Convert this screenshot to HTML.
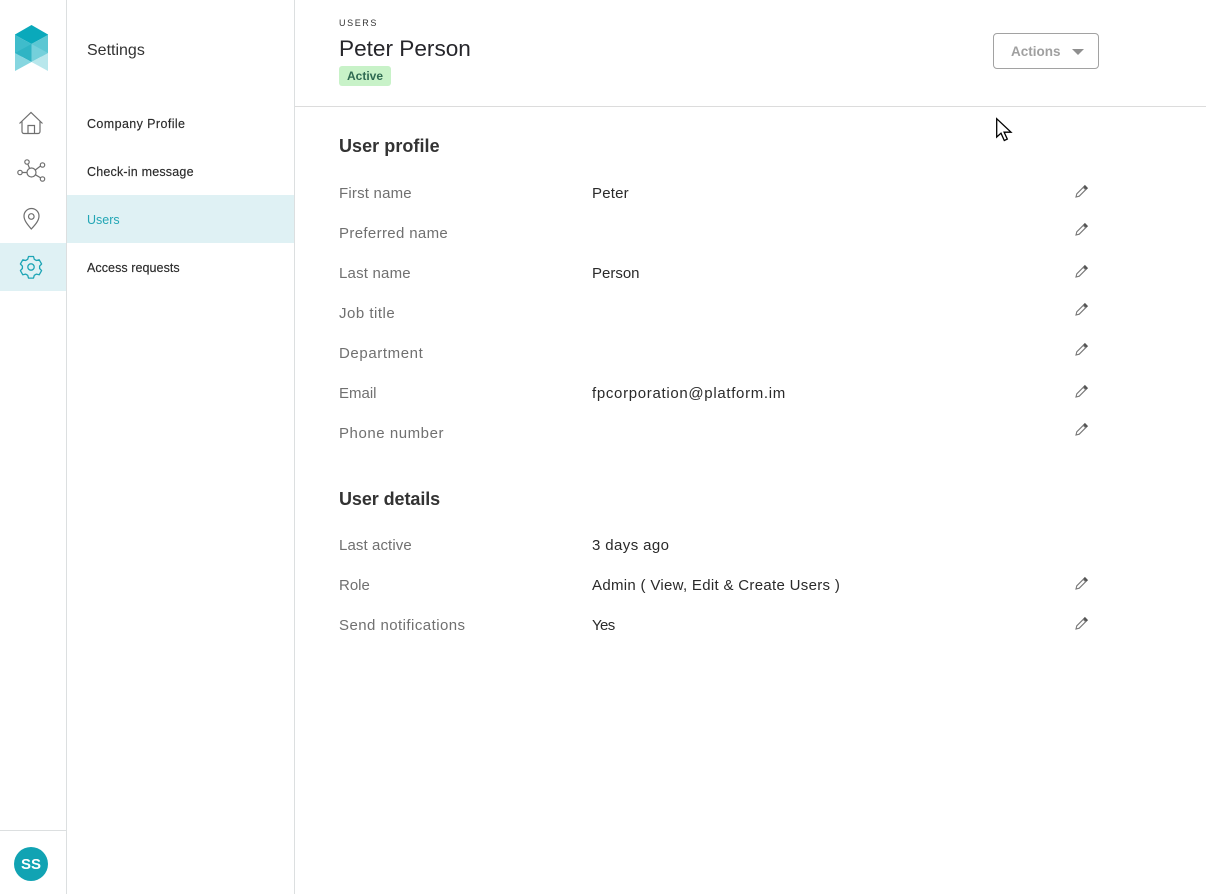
<!DOCTYPE html>
<html>
<head>
<meta charset="utf-8">
<style>
html,body{margin:0;padding:0;background:#fff}
body{position:relative;width:1206px;height:894px;overflow:hidden;font-family:"Liberation Sans",sans-serif;color:#222}
.a{position:absolute;white-space:nowrap}
.nav{left:87px;font-size:12.5px;line-height:16px;color:#2b2b2b;-webkit-text-stroke:.15px #2b2b2b}
.l{left:339px;font-size:15px;line-height:20px;color:#707070}
.v{left:592px;font-size:15px;line-height:20px;color:#2a2a2a}
.h{left:339px;font-size:18px;line-height:24px;font-weight:bold;color:#333}
svg{position:absolute;overflow:visible}
</style>
</head>
<body>
<div class="a" style="left:66px;top:0;width:1px;height:894px;background:#dcdfe0"></div>
<div class="a" style="left:294px;top:0;width:1px;height:894px;background:#dcdfe0"></div>
<div class="a" style="left:295px;top:106px;width:911px;height:1px;background:#dcdcdc"></div>
<div class="a" style="left:0;top:830px;width:66px;height:1px;background:#dcdfe0"></div>
<div class="a" style="left:0;top:243px;width:66px;height:48px;background:#dff1f4"></div>
<div class="a" style="left:67px;top:195px;width:227px;height:48px;background:#dff1f4"></div>

<svg style="left:0;top:0" width="66" height="90" viewBox="0 0 66 90">
<polygon points="31.5,25 48,34.500 48,35 31.500,44 15,35 15,34.500" fill="#0aa9bb"/>
<polygon points="15,35 31.500,44 31.500,52 15,60" fill="#3fbccb"/>
<polygon points="48,35 31.500,44 31.500,52 48,60" fill="#5cc7d3"/>
<polygon points="31.500,44 15,53 31.500,62" fill="#2fb4c4"/>
<polygon points="31.500,44 48,53 31.500,62" fill="#74d0db"/>
<polygon points="15,53 31.500,62 15,71" fill="#86d6e0"/>
<polygon points="48,53 31.500,62 48,71" fill="#b8e7ec"/>
</svg>

<svg style="left:0;top:100px" width="66" height="190" viewBox="0 0 66 190" fill="none" stroke="#6e6e6e" stroke-width="1.200">
<path d="M19.500 23.500 31 12.500 42.500 23.500M22 21v10.500a2 2 0 0 0 2 2h14a2 2 0 0 0 2-2V21M28 33.500V25.500h6.500v8"/>
<circle cx="31.500" cy="72.500" r="4.500"/>
<circle cx="20" cy="72.500" r="2.200"/><circle cx="27" cy="62" r="2.200"/><circle cx="42.500" cy="65" r="2.200"/><circle cx="42.500" cy="79" r="2.200"/>
<path d="M22.200 72.500H27M27.800 64.100l1.800 4.300M40.500 66 35.300 70M40.700 77.900 35.500 74.800"/>
<path d="M31.300 129C27.500 124.500 24 120.500 24 116a7.500 7.500 0 0 1 15 0c0 4.500-3.500 8.500-7.700 13z"/>
<circle cx="31.300" cy="116.500" r="2.800"/>
<g stroke="#1da5b5" stroke-width="1.300">
<circle cx="31" cy="167" r="3.200"/>
<path d="M28.500 156.500h5l.8 2.800 2.100 1.200 2.800-.7 2.400 4.200-2 2.100v2.400l2 2.100-2.400 4.200-2.800-.7-2.100 1.200-.8 2.800h-5l-.8-2.800-2.100-1.200-2.800.7-2.400-4.200 2-2.100v-2.400l-2-2.100 2.400-4.200 2.800.7 2.100-1.200z" stroke-linejoin="round"/>
</g>
</svg>

<div class="a" style="left:14px;top:847px;width:34px;height:34px;border-radius:50%;background:#11a3b3;color:#fff;font-size:15px;font-weight:bold;line-height:35px;text-align:center">SS</div>

<div class="a" style="left:87px;top:41px;font-size:16px;line-height:20px;color:#333">Settings</div>
<div class="a nav" style="top:116px;letter-spacing:.4px">Company Profile</div>
<div class="a nav" style="top:164px;letter-spacing:.2px">Check-in message</div>
<div class="a nav" style="top:212px;color:#22a6b5;-webkit-text-stroke:0">Users</div>
<div class="a nav" style="top:260px;letter-spacing:.07px">Access requests</div>

<div class="a" style="left:339px;top:18px;font-size:9px;line-height:11px;letter-spacing:1.6px;color:#333">USERS</div>
<div class="a" style="left:339px;top:34px;font-size:22.600px;line-height:30px;color:#26262b">Peter Person</div>
<div class="a" style="left:339px;top:66px;width:52px;height:20px;border-radius:3px;background:#c8f2c8;color:#2f6a52;font-size:12px;font-weight:bold;line-height:21px;text-align:center">Active</div>

<div class="a" style="left:993px;top:33px;width:104px;height:34px;border:1px solid #a2a2a2;border-radius:4px"></div>
<div class="a" style="left:1011px;top:43px;font-size:13.500px;font-weight:bold;line-height:18px;color:#a0a0a0">Actions</div>
<svg style="left:1072px;top:48.500px" width="12" height="7"><polygon points="0,0 12,0 6,6" fill="#8f8f8f"/></svg>

<svg style="left:996px;top:118px" width="16" height="25" viewBox="0 0 16 25"><path d="M.7.700V19l4.300-3.800 3.300 7.300 3-1.400-3.200-6.900H15z" fill="#fff" stroke="#000" stroke-width="1.300"/></svg>

<div class="a h" style="left:339px;top:134px;letter-spacing:.05px">User profile</div>
<div class="a l" style="top:184px;letter-spacing:.2px">First name</div><div class="a v" style="top:184px;letter-spacing:.2px">Peter</div>
<div class="a l" style="top:224px;letter-spacing:.35px">Preferred name</div>
<div class="a l" style="top:264px;letter-spacing:.2px">Last name</div><div class="a v" style="top:264px">Person</div>
<div class="a l" style="top:304px;letter-spacing:.5px">Job title</div>
<div class="a l" style="top:344px;letter-spacing:.6px">Department</div>
<div class="a l" style="top:384px">Email</div><div class="a v" style="top:384px;letter-spacing:.68px">fpcorporation@platform.im</div>
<div class="a l" style="top:424px;letter-spacing:.55px">Phone number</div>

<div class="a h" style="left:339px;top:487px;letter-spacing:-.08px">User details</div>
<div class="a l" style="top:536px;letter-spacing:.1px">Last active</div><div class="a v" style="top:536px;letter-spacing:.4px">3 days ago</div>
<div class="a l" style="top:576px">Role</div><div class="a v" style="top:576px;letter-spacing:.31px">Admin ( View, Edit &amp; Create Users )</div>
<div class="a l" style="top:616px;letter-spacing:.45px">Send notifications</div><div class="a v" style="top:616px;letter-spacing:-.6px">Yes</div>

<svg style="left:1075px;top:185px" width="13" height="13" viewBox="0 0 13 13" fill="none" stroke="#777" stroke-width="1.100"><path d="M1 12l.8-3.200L8.300 2.300l2.400 2.400-6.500 6.500z"/><path d="M9 1.600 9.900.7l2.400 2.400-.9.9z" fill="#555" stroke="#555"/></svg>
<svg style="left:1075px;top:223px" width="13" height="13" viewBox="0 0 13 13" fill="none" stroke="#777" stroke-width="1.100"><path d="M1 12l.8-3.200L8.300 2.300l2.400 2.400-6.500 6.500z"/><path d="M9 1.600 9.900.7l2.400 2.400-.9.9z" fill="#555" stroke="#555"/></svg>
<svg style="left:1075px;top:265px" width="13" height="13" viewBox="0 0 13 13" fill="none" stroke="#777" stroke-width="1.100"><path d="M1 12l.8-3.200L8.300 2.300l2.400 2.400-6.500 6.500z"/><path d="M9 1.600 9.900.7l2.400 2.400-.9.9z" fill="#555" stroke="#555"/></svg>
<svg style="left:1075px;top:303px" width="13" height="13" viewBox="0 0 13 13" fill="none" stroke="#777" stroke-width="1.100"><path d="M1 12l.8-3.200L8.300 2.300l2.400 2.400-6.500 6.500z"/><path d="M9 1.600 9.900.7l2.400 2.400-.9.9z" fill="#555" stroke="#555"/></svg>
<svg style="left:1075px;top:343px" width="13" height="13" viewBox="0 0 13 13" fill="none" stroke="#777" stroke-width="1.100"><path d="M1 12l.8-3.200L8.300 2.300l2.400 2.400-6.500 6.500z"/><path d="M9 1.600 9.900.7l2.400 2.400-.9.9z" fill="#555" stroke="#555"/></svg>
<svg style="left:1075px;top:385px" width="13" height="13" viewBox="0 0 13 13" fill="none" stroke="#777" stroke-width="1.100"><path d="M1 12l.8-3.200L8.300 2.300l2.400 2.400-6.500 6.500z"/><path d="M9 1.600 9.900.7l2.400 2.400-.9.9z" fill="#555" stroke="#555"/></svg>
<svg style="left:1075px;top:423px" width="13" height="13" viewBox="0 0 13 13" fill="none" stroke="#777" stroke-width="1.100"><path d="M1 12l.8-3.200L8.300 2.300l2.400 2.400-6.500 6.500z"/><path d="M9 1.600 9.900.7l2.400 2.400-.9.9z" fill="#555" stroke="#555"/></svg>
<svg style="left:1075px;top:577px" width="13" height="13" viewBox="0 0 13 13" fill="none" stroke="#777" stroke-width="1.100"><path d="M1 12l.8-3.200L8.300 2.300l2.400 2.400-6.500 6.500z"/><path d="M9 1.600 9.900.7l2.400 2.400-.9.9z" fill="#555" stroke="#555"/></svg>
<svg style="left:1075px;top:617px" width="13" height="13" viewBox="0 0 13 13" fill="none" stroke="#777" stroke-width="1.100"><path d="M1 12l.8-3.200L8.300 2.300l2.400 2.400-6.500 6.500z"/><path d="M9 1.600 9.900.7l2.400 2.400-.9.9z" fill="#555" stroke="#555"/></svg>
</body>
</html>
